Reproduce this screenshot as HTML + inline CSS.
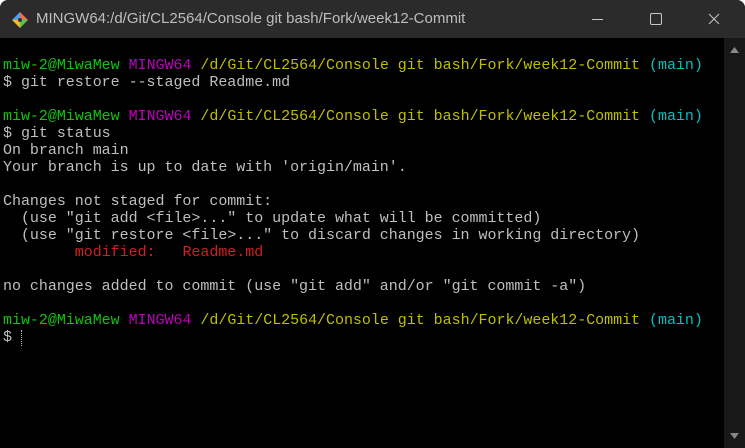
<!DOCTYPE html>
<html><head><meta charset="utf-8"><style>
html,body{margin:0;padding:0;width:745px;height:448px;overflow:hidden;background:#fff}
.win{position:absolute;left:0;top:0;width:745px;height:448px;background:#000;border-radius:8px 8px 0 0;overflow:hidden}
.tb{position:absolute;left:0;top:0;width:745px;height:38px;background:#2b2b2b;color:#c8c8c8;font:15px "Liberation Sans",sans-serif}
.tb .t{position:absolute;left:36px;top:10px;white-space:nowrap;color:#bdbdbd}
.sb{position:absolute;right:0;top:38px;width:21px;height:410px;background:#181818}
.term{position:absolute;left:3px;top:57px;font:15px/17px "Liberation Mono",monospace;letter-spacing:-0.03px;color:#bfbfbf;white-space:pre;margin:0}
.g{color:#12c212}.m{color:#bf00bf}.y{color:#bfbf00}.c{color:#00bfbf}.r{color:#d02020}
</style></head><body>
<div class="win">
<div class="tb">
<svg style="position:absolute;left:11px;top:11px" width="18" height="18" viewBox="0 0 18 18">
<rect x="4.5" y="4.5" width="9" height="9" transform="rotate(45 9 9)" fill="#e05040"/>
<polygon points="9,1 17,9 9,9" fill="#f07050"/>
<polygon points="1,9 9,1 9,9" fill="#4aa0f0"/>
<polygon points="9,9 17,9 9,17" fill="#60c050"/>
<polygon points="1,9 9,9 9,17" fill="#f0c020"/>
<circle cx="9" cy="9" r="2" fill="#333"/>
</svg>
<span class="t">MINGW64:/d/Git/CL2564/Console git bash/Fork/week12-Commit</span>
<div style="position:absolute;left:592px;top:19px;width:11px;height:1px;background:#c8c8c8"></div>
<div style="position:absolute;left:650px;top:13px;width:10px;height:10px;border:1px solid #c8c8c8;border-radius:2px"></div>
<svg style="position:absolute;left:708px;top:13px" width="12" height="12" viewBox="0 0 12 12"><path d="M1 1L11 11M11 1L1 11" stroke="#c8c8c8" stroke-width="1"/></svg>
</div>
<div class="sb">
<svg style="position:absolute;left:6px;top:9px" width="9" height="6"><polygon points="4.5,0 9,6 0,6" fill="#888"/></svg>
<svg style="position:absolute;left:6px;top:395px" width="9" height="6"><polygon points="0,0 9,0 4.5,6" fill="#888"/></svg>
</div>
<pre class="term"><span class="g">miw-2@MiwaMew</span> <span class="m">MINGW64</span> <span class="y">/d/Git/CL2564/Console git bash/Fork/week12-Commit</span> <span class="c">(main)</span>
$ git restore --staged Readme.md

<span class="g">miw-2@MiwaMew</span> <span class="m">MINGW64</span> <span class="y">/d/Git/CL2564/Console git bash/Fork/week12-Commit</span> <span class="c">(main)</span>
$ git status
On branch main
Your branch is up to date with 'origin/main'.

Changes not staged for commit:
  (use "git add &lt;file&gt;..." to update what will be committed)
  (use "git restore &lt;file&gt;..." to discard changes in working directory)
        <span class="r">modified:   Readme.md</span>

no changes added to commit (use "git add" and/or "git commit -a")

<span class="g">miw-2@MiwaMew</span> <span class="m">MINGW64</span> <span class="y">/d/Git/CL2564/Console git bash/Fork/week12-Commit</span> <span class="c">(main)</span>
$ </pre>
<div style="position:absolute;left:21px;top:330px;width:0;height:16px;border-left:1px dotted #bfbfbf"></div>
</div>
</body></html>
